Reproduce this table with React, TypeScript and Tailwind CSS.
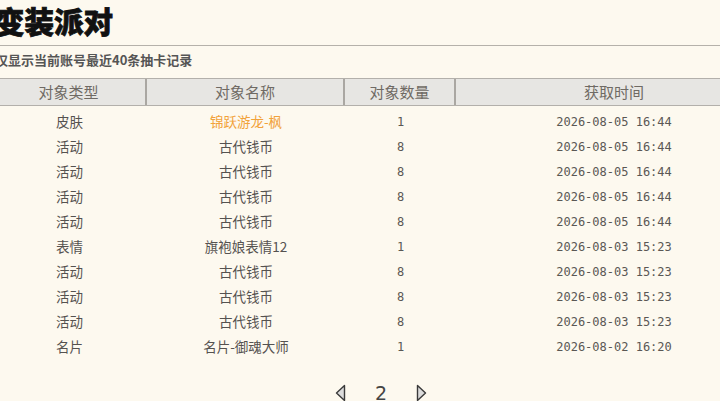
import React from "react";

const rows: [string, string, string, string, boolean?][] = [
  ["皮肤", "锦跃游龙-枫", "1", "2026-08-05 16:44", true],
  ["活动", "古代钱币", "8", "2026-08-05 16:44"],
  ["活动", "古代钱币", "8", "2026-08-05 16:44"],
  ["活动", "古代钱币", "8", "2026-08-05 16:44"],
  ["活动", "古代钱币", "8", "2026-08-05 16:44"],
  ["表情", "旗袍娘表情12", "1", "2026-08-03 15:23"],
  ["活动", "古代钱币", "8", "2026-08-03 15:23"],
  ["活动", "古代钱币", "8", "2026-08-03 15:23"],
  ["活动", "古代钱币", "8", "2026-08-03 15:23"],
  ["名片", "名片-御魂大师", "1", "2026-08-02 16:20"],
];

const cjk = { fontFamily: '"Noto Sans CJK SC", "Noto Sans", sans-serif' };
const mono = { fontFamily: '"DejaVu Sans Mono", "Noto Sans CJK SC", monospace' };

function Tri({ dir }: { dir: "left" | "right" }) {
  return (
    <svg width="11" height="18" viewBox="0 0 11 18">
      {dir === "left" ? (
        <path d="M9.5 1.5 L1.5 9 L9.5 16.5 Z" fill="#dcdcdc" stroke="#3a3a3a" strokeWidth="1.4" strokeLinejoin="round" />
      ) : (
        <path d="M1.5 1.5 L9.5 9 L1.5 16.5 Z" fill="#dcdcdc" stroke="#3a3a3a" strokeWidth="1.4" strokeLinejoin="round" />
      )}
    </svg>
  );
}

export default function App() {
  return (
    <div className="w-[720px] h-[401px] overflow-hidden bg-[#fdf9ef]" style={cjk}>
      <div className="ml-[-8px] w-[780px]">
        <div className="h-[45px] pl-[3px] pt-[2px] text-[29.5px] font-black leading-[36px] text-[#111] [-webkit-text-stroke:0.8px_#111]">
          变装派对
        </div>
        <div className="h-px bg-[#b5b1aa]" />
        <div className="h-[32px] pl-[3px] pt-[6px] text-[13px] font-bold leading-[16px] text-[#555]">
          仅显示当前账号最近40条抽卡记录
        </div>
        <div className="grid grid-cols-[155px_198px_111px_316px] h-[28px] bg-[#e7e6e3] border-y border-[#b3b0ab] text-[15px] text-[#6f6a64]">
          <div className="flex items-center justify-center border-r-2 border-[#aaa7a2]">对象类型</div>
          <div className="flex items-center justify-center border-r-2 border-[#aaa7a2]">对象名称</div>
          <div className="flex items-center justify-center border-r-2 border-[#aaa7a2]">对象数量</div>
          <div className="flex items-center justify-center">获取时间</div>
        </div>
        <div className="pt-[3px]">
          {rows.map((r, i) => (
            <div key={i} className="grid grid-cols-[155px_198px_111px_316px] h-[25px] text-[13.5px] text-[#555250]">
              <div className="flex items-center justify-center">{r[0]}</div>
              <div className={"flex items-center justify-center " + (r[4] ? "text-[#f2a23a]" : "")}>{r[1]}</div>
              <div className="flex items-center justify-center text-[12px] text-[#5a5754]" style={mono}>{r[2]}</div>
              <div className="flex items-center justify-center text-[12px] text-[#5a5754]" style={mono}>{r[3]}</div>
            </div>
          ))}
        </div>
        <div className="flex items-center justify-center gap-[29px] pt-[24px] w-[778px]">
          <Tri dir="left" />
          <span className="text-[19px] leading-[20px] text-[#444]" style={{ fontFamily: '"DejaVu Sans", sans-serif' }}>2</span>
          <Tri dir="right" />
        </div>
      </div>
    </div>
  );
}
